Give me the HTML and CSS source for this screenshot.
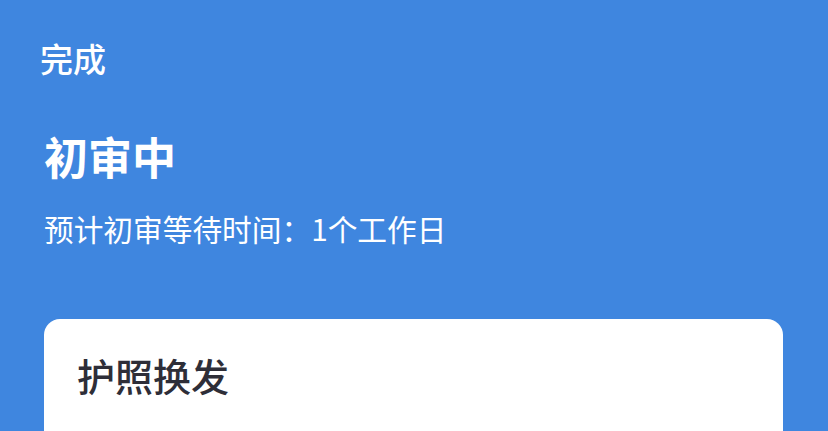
FILE: index.html
```html
<!DOCTYPE html>
<html lang="zh-CN">
<head>
<meta charset="utf-8">
<title>初审中</title>
<link rel="stylesheet" href="styles.css">
</head>
<body>
<div class="page">
  <div class="nav"><span class="done">完成</span></div>
  <div class="status">
    <h1 class="status-title">初审中</h1>
    <p class="status-sub">预计初审等待时间：1个工作日</p>
  </div>
  <div class="card">
    <h2 class="card-title">护照换发</h2>
  </div>
</div>
</body>
</html>
```

FILE: styles.css
```css
html, body {
  margin: 0;
  padding: 0;
  background: #3f86df;
}
body {
  font-family: "Noto Sans CJK SC", "Noto Sans", sans-serif;
  overflow: hidden;
  height: 431px;
}
.page {
  padding: 38px 45px 0 44px;
  box-sizing: border-box;
  height: 431px;
}
.nav {
  height: 41px;
  line-height: 41px;
  margin-left: -4px;
}
.done {
  color: #ffffff;
  font-size: 33px;
  font-weight: 500;
}
.status {
  padding-top: 49px;
}
.status-title {
  margin: 0;
  color: #ffffff;
  font-size: 44px;
  line-height: 56px;
  font-weight: 700;
}
.status-sub {
  margin: 25px 0 0 0;
  color: #ffffff;
  font-size: 29.7px;
  line-height: 40px;
  font-weight: 400;
}
.card {
  margin-top: 70px;
  background: #ffffff;
  border-radius: 16px 16px 0 0;
  padding: 31px 33px 0 33px;
  height: 112px;
  box-sizing: border-box;
}
.card-title {
  margin: 0;
  color: #2e2e38;
  font-size: 38px;
  line-height: 50px;
  font-weight: 500;
}
```
